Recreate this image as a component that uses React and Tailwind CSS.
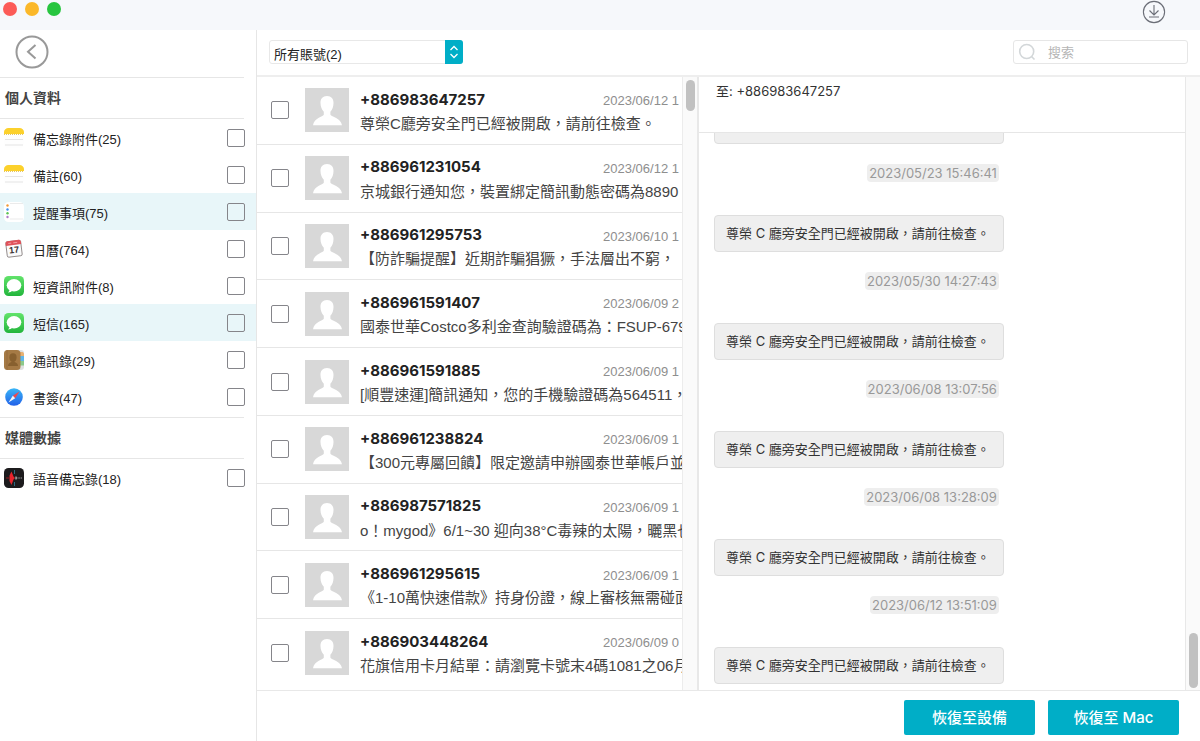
import React, { useState } from "react";

const personalItems = [
  { id: "note-files", name: "備忘錄附件", count: 25, icon: "notes" },
  { id: "notes", name: "備註", count: 60, icon: "notes" },
  { id: "reminders", name: "提醒事項", count: 75, icon: "reminders", active: true },
  { id: "calendar", name: "日曆", count: 764, icon: "calendar" },
  { id: "sms-files", name: "短資訊附件", count: 8, icon: "messages" },
  { id: "sms", name: "短信", count: 165, icon: "messages", active: true },
  { id: "contacts", name: "通訊錄", count: 29, icon: "contacts" },
  { id: "bookmarks", name: "書簽", count: 47, icon: "safari" },
];

const mediaItems = [{ id: "voice", name: "語音備忘錄", count: 18, icon: "voice" }];

const threads = [
  { phone: "+886983647257", date: "2023/06/12 1", text: "尊榮C廳旁安全門已經被開啟，請前往檢查。" },
  { phone: "+886961231054", date: "2023/06/12 1", text: "京城銀行通知您，裝置綁定簡訊動態密碼為8890" },
  { phone: "+886961295753", date: "2023/06/10 1", text: "【防詐騙提醒】近期詐騙猖獗，手法層出不窮，" },
  { phone: "+886961591407", date: "2023/06/09 2", text: "國泰世華Costco多利金查詢驗證碼為：FSUP-679" },
  { phone: "+886961591885", date: "2023/06/09 1", text: "[順豐速運]簡訊通知，您的手機驗證碼為564511，" },
  { phone: "+886961238824", date: "2023/06/09 1", text: "【300元專屬回饋】限定邀請申辦國泰世華帳戶並" },
  { phone: "+886987571825", date: "2023/06/09 1", text: "o！mygod》6/1~30 迎向38°C毒辣的太陽，曬黑也" },
  { phone: "+886961295615", date: "2023/06/09 1", text: "《1-10萬快速借款》持身份證，線上審核無需碰面" },
  { phone: "+886903448264", date: "2023/06/09 0", text: "花旗信用卡月結單：請瀏覽卡號末4碼1081之06月" },
];

const messageText = "尊榮 C 廳旁安全門已經被開啟，請前往檢查。";

const messageDates = [
  "2023/05/23 15:46:41",
  "2023/05/30 14:27:43",
  "2023/06/08 13:07:56",
  "2023/06/08 13:28:09",
  "2023/06/12 13:51:09",
];

const ItemIcon = ({ type }) => {
  if (type === "notes") {
    return (
      <svg viewBox="0 0 20 20" className="size-5">
        <rect width="20" height="20" rx="4.5" fill="#fefefe" />
        <path d="M0 6V4A4.500 4 0 0 1 4.500 0h11A4.500 4 0 0 1 20 4v2z" fill="#fcd12c" />
        <path d="M0 6.500h20" stroke="#e3c768" strokeDasharray="1 1" />
        <path d="M1 11.500h18M1 17h18" stroke="#dedede" strokeWidth=".8" />
      </svg>
    );
  }
  if (type === "reminders") {
    return (
      <svg viewBox="0 0 20 20" className="size-5">
        <rect width="20" height="20" rx="4.5" fill="#fff" />
        <path d="M6 1.500h13M6 17h13" stroke="#e2e2e2" strokeWidth=".7" />
        <circle cx="3.500" cy="3.500" r="1.200" fill="#f29a38" />
        <circle cx="3.500" cy="7.500" r="1.200" fill="#3d8ef0" />
        <circle cx="3.500" cy="11.300" r="1.200" fill="#5ec455" />
        <circle cx="3.500" cy="15" r="1.200" fill="#b07ac9" />
      </svg>
    );
  }
  if (type === "calendar") {
    return (
      <svg viewBox="0 0 20 20" className="size-5">
        <g transform="rotate(-7 10 10)">
          <rect x="2.500" y="2" width="15" height="15.500" rx="1.500" fill="#fbfbfb" stroke="#8d8585" strokeWidth=".9" />
          <path d="M2.300 6V3.500a2 2 0 0 1 2-2h11.400a2 2 0 0 1 2 2V6z" fill="#e0525a" />
          <path d="M5 3.800h3M10 3.800h4" stroke="#f7b9bd" strokeWidth=".7" />
          <text x="10" y="14" textAnchor="middle" fontSize="9" fontWeight="700" fill="#3a3434" fontFamily="Liberation Sans, sans-serif">
            17
          </text>
        </g>
      </svg>
    );
  }
  if (type === "messages") {
    return (
      <svg viewBox="0 0 20 20" className="size-5">
        <defs>
          <linearGradient id="msgGreen" x1="0" y1="0" x2="0" y2="1">
            <stop offset="0" stopColor="#62e36b" />
            <stop offset="1" stopColor="#22b53c" />
          </linearGradient>
        </defs>
        <rect width="20" height="20" rx="4.500" fill="url(#msgGreen)" />
        <ellipse cx="10" cy="9.300" rx="7.300" ry="6.200" fill="#fff" />
        <path d="M5.500 12.500c.3 2-.4 3.200-1.600 4 2 0 3.700-.8 4.600-2z" fill="#fff" />
      </svg>
    );
  }
  if (type === "contacts") {
    return (
      <svg viewBox="0 0 20 20" className="size-5">
        <rect x="10" width="10" height="20" rx="3" fill="#dfe0e0" />
        <path d="M16 2h2.500A2 2 0 0 1 20 4v2h-4z" fill="#e8b070" />
        <path d="M16 6h4v5h-4z" fill="#5fb6ea" />
        <path d="M16 11h4v4.500h-4z" fill="#8cc98a" />
        <rect width="16.500" height="20" rx="3.500" fill="#a57a45" />
        <path d="M3 0v20" stroke="#94693a" strokeWidth=".7" />
        <ellipse cx="9" cy="7.500" rx="3.600" ry="4.200" fill="#87602f" />
        <path d="M4 16c0-2.600 2-3.400 3.500-4V9h3v3c1.600.6 3.500 1.400 3.500 4z" fill="#87602f" />
      </svg>
    );
  }
  if (type === "safari") {
    return (
      <svg viewBox="0 0 20 20" className="size-5">
        <defs>
          <linearGradient id="safariBlue" x1="0" y1="0" x2="0" y2="1">
            <stop offset="0" stopColor="#39b6f7" />
            <stop offset="1" stopColor="#2260e8" />
          </linearGradient>
        </defs>
        <circle cx="10" cy="10" r="8.800" fill="url(#safariBlue)" />
        <path d="M15.500 4.500 8.800 8.800l2.400 2.400z" fill="#f0484d" />
        <path d="M4.500 15.500 8.800 8.800l2.400 2.400z" fill="#f4f6f8" />
      </svg>
    );
  }
  return (
    <svg viewBox="0 0 20 20" className="size-5">
      <rect width="20" height="20" rx="4.500" fill="#1c1b1d" />
      <path d="M7.500 3.500 9.500 8.500 11 10l-1.500 1.500-2 5.500-2-4V7.500z" fill="#e8242c" />
      <path d="M2 10h3" stroke="#7d1b20" strokeWidth="1.200" />
      <path d="M10.500 2v4M10.500 14v4" stroke="#2f7f9a" strokeWidth=".8" />
      <path d="M12 8.500v3" stroke="#ddd" strokeWidth="1" />
      <path d="M12 10h6" stroke="#bdbdbd" strokeWidth=".8" strokeDasharray="1.500 .8" />
    </svg>
  );
};

const checkboxClass =
  "size-[18px] shrink-0 appearance-none rounded-[2px] border border-[#85858a] bg-transparent checked:border-[#00aec7] checked:bg-[#00aec7]";

const Avatar = () => (
  <svg viewBox="0 0 44 44" className="size-11 shrink-0">
    <rect width="44" height="44" fill="#d8d8d8" />
    <path
      d="M22 8c-4.300 0-6.700 3-6.500 7.300.1 3.600 1.300 6.400 3.300 8.400v3.100c-1 2.200-9.600 3-10.800 10.400h29c-1.200-7.400-10.600-8.200-11.600-10.400v-3.100c2-2 3-4.800 3.100-8.400C28.700 11 26.300 8 22 8z"
      fill="#fff"
    />
  </svg>
);

const SidebarHeading = ({ children }) => (
  <h2 className="mr-3 border-b border-[#e6e6e6] py-2 pl-[5px] text-sm leading-6 font-bold text-[#444]">{children}</h2>
);

const SidebarList = ({ items, checked, onToggle }) => (
  <ul>
    {items.map((item) => (
      <li key={item.id} className={item.active ? "bg-[#e8f6f9]" : ""}>
        <label className="flex h-[37px] items-center pr-[11px] pl-1 text-[13px] text-[#222]">
          <ItemIcon type={item.icon} />
          <span className="ml-[9px] flex-1 pt-1">
            {item.name}({item.count})
          </span>
          <input
            type="checkbox"
            checked={!!checked[item.id]}
            onChange={() => onToggle(item.id)}
            className={checkboxClass}
          />
        </label>
      </li>
    ))}
  </ul>
);

const App = () => {
  const [checked, setChecked] = useState({});
  const [search, setSearch] = useState("");

  const handleToggle = (id) => {
    setChecked({ ...checked, [id]: !checked[id] });
  };

  return (
    <div className="flex h-screen flex-col overflow-hidden bg-white font-['Liberation_Sans','Noto_Sans_CJK_TC',sans-serif] text-[#333]">
      {/* Title bar */}
      <header className="flex h-[30px] shrink-0 items-start justify-between bg-[#f6f8fb] pr-[34px] pl-[3px]">
        <div className="flex gap-2 pt-0.5">
          <button aria-label="關閉" className="size-[14px] rounded-full bg-[#fc5b57]" />
          <button aria-label="最小化" className="size-[14px] rounded-full bg-[#fbb829]" />
          <button aria-label="放大" className="size-[14px] rounded-full bg-[#27c53f]" />
        </div>
        <button aria-label="下載">
          <svg viewBox="0 0 24 24" className="size-6" fill="none" stroke="#6c6f78" strokeWidth="1.100">
            <circle cx="12" cy="12" r="10.600" />
            <path d="M12 5v9.500M7.500 10.500l4.500 4.500 4.500-4.500M7 17h10" />
          </svg>
        </button>
      </header>

      <div className="flex min-h-0 flex-1">
        {/* Sidebar */}
        <aside className="w-[257px] shrink-0 border-r border-[#e6e6e6]">
          <div className="mr-3 flex h-12 items-center border-b border-[#e6e6e6] pb-1 pl-[15px]">
            <button aria-label="返回">
              <svg viewBox="0 0 34 34" className="size-[34px]" fill="none" stroke="#999" strokeWidth="2">
                <circle cx="17" cy="17" r="15.500" />
                <path d="M20.500 10 13 16.700l7.500 6.800" />
              </svg>
            </button>
          </div>
          <SidebarHeading>個人資料</SidebarHeading>
          <SidebarList items={personalItems} checked={checked} onToggle={handleToggle} />
          <div className="mt-0.5 mr-3 border-t border-[#e6e6e6]" />
          <SidebarHeading>媒體數據</SidebarHeading>
          <SidebarList items={mediaItems} checked={checked} onToggle={handleToggle} />
        </aside>

        <main className="flex min-w-0 flex-1 flex-col">
          {/* Toolbar */}
          <div className="flex h-[47px] shrink-0 items-center justify-between border-b-2 border-[#eee] px-3 pb-0.5">
            <div className="relative h-6 w-[194px]">
              <select
                aria-label="賬號"
                className="h-6 w-full appearance-none rounded-[3px] border border-[#e8e8e8] bg-white pt-1 pl-1 text-[13px] text-[#222]"
              >
                <option>所有賬號(2)</option>
              </select>
              <span className="pointer-events-none absolute inset-y-0 right-0 flex w-[18px] items-center justify-center rounded-r-[3px] bg-[#00aec7]">
                <svg viewBox="0 0 10 14" className="h-3.5 w-2.5" fill="none" stroke="#fff" strokeWidth="1.300">
                  <path d="M1.500 5 5 1.500 8.500 5M1.500 9 5 12.500 8.500 9" />
                </svg>
              </span>
            </div>
            <label className="flex h-6 w-[175px] items-center rounded-[3px] border border-[#e6e6e6] pl-1">
              <svg viewBox="0 0 18 18" className="size-[18px] shrink-0" fill="none" stroke="#d3d7d9" strokeWidth="1.600">
                <circle cx="8.700" cy="8.500" r="7" />
                <path d="M13.500 13.500l3 3" />
              </svg>
              <input
                type="text"
                aria-label="搜索"
                value={search}
                onChange={(e) => setSearch(e.target.value)}
                placeholder="搜索"
                className="ml-3 min-w-0 flex-1 pt-0.5 text-[13px] outline-none placeholder:text-[#b5b5b5]"
              />
            </label>
          </div>

          <div className="flex min-h-0 flex-1">
            {/* Conversations */}
            <section className="flex min-w-0 flex-[441] border-r-2 border-[#e8e8e8]">
              <ul className="flex min-w-0 flex-1 flex-col overflow-hidden pb-1">
                {threads.map((thread, index) => (
                  <li
                    key={thread.phone}
                    className={`flex min-h-0 flex-1 items-center pl-[14px] ${index < threads.length - 1 ? "border-b border-[#e6e6e6]" : ""}`}
                  >
                    <input
                      type="checkbox"
                      aria-label={thread.phone}
                      checked={!!checked[thread.phone]}
                      onChange={() => handleToggle(thread.phone)}
                      className={checkboxClass}
                    />
                    <div className="mr-[11px] ml-4">
                      <Avatar />
                    </div>
                    <div className="min-w-0 flex-1 overflow-hidden pt-0.5 whitespace-nowrap">
                      <div className="flex h-6 items-center">
                        <span className="flex-1 font-['Inter',sans-serif] text-[15px] font-bold text-[#222]">{thread.phone}</span>
                        <span className="w-[79px] pt-0.5 text-[13px] text-[#8e8e8e]">{thread.date}</span>
                      </div>
                      <p className="text-[15px] leading-[23px] text-[#444]">{thread.text}</p>
                    </div>
                  </li>
                ))}
              </ul>
              <div className="w-[15px] shrink-0 border-l border-[#ececec] bg-[#fafafa] pt-[3px] pl-[3px]">
                <div className="h-[31px] w-[9px] rounded-full bg-[#c1c1c1]" />
              </div>
            </section>

            {/* Messages */}
            <section className="flex min-w-0 flex-[502] font-['Inter','Noto_Sans_CJK_TC',sans-serif] text-[13px]">
              <div className="flex min-w-0 flex-1 flex-col">
                <div className="h-14 shrink-0 border-b border-[#e6e6e6] pt-1 pl-[17px] leading-5">至: +886983647257</div>
                <div className="flex min-h-0 flex-1 flex-col items-start justify-end overflow-hidden pb-[6px] pl-[15px]">
                  <p className="shrink-0 rounded border border-[#dedede] bg-[#efefef] py-2 pr-[13px] pl-[11px] leading-[19px]">
                    {messageText}
                  </p>
                  {messageDates.map((date) => (
                    <div key={date} className="flex shrink-0 flex-col pt-5">
                      <time className="mr-[5px] self-end rounded bg-[#eee] px-0.5 leading-[18px] text-[#999]">{date}</time>
                      <p className="mt-[33px] rounded border border-[#dedede] bg-[#efefef] py-2 pr-[13px] pl-[11px] leading-[19px]">
                        {messageText}
                      </p>
                    </div>
                  ))}
                </div>
              </div>
              <div className="flex w-[15px] shrink-0 flex-col justify-end border-l border-[#e8e8e8] bg-[#fafafa] pb-[2px] pl-[3px]">
                <div className="h-[55px] w-[9px] rounded-full bg-[#c1c1c1]" />
              </div>
            </section>
          </div>

          {/* Footer */}
          <footer className="flex h-[51px] shrink-0 items-center justify-end gap-[13px] border-t border-[#e8e8e8] pt-0.5 pr-[21px] font-['Inter','Noto_Sans_CJK_TC',sans-serif] text-[15px] font-medium text-white">
            <button className="h-[35px] w-[131px] rounded-[2px] bg-[#00aec7] pt-0.5">恢復至設備</button>
            <button className="h-[35px] w-[131px] rounded-[2px] bg-[#00aec7] pt-0.5">恢復至 Mac</button>
          </footer>
        </main>
      </div>
    </div>
  );
};

export default App;
